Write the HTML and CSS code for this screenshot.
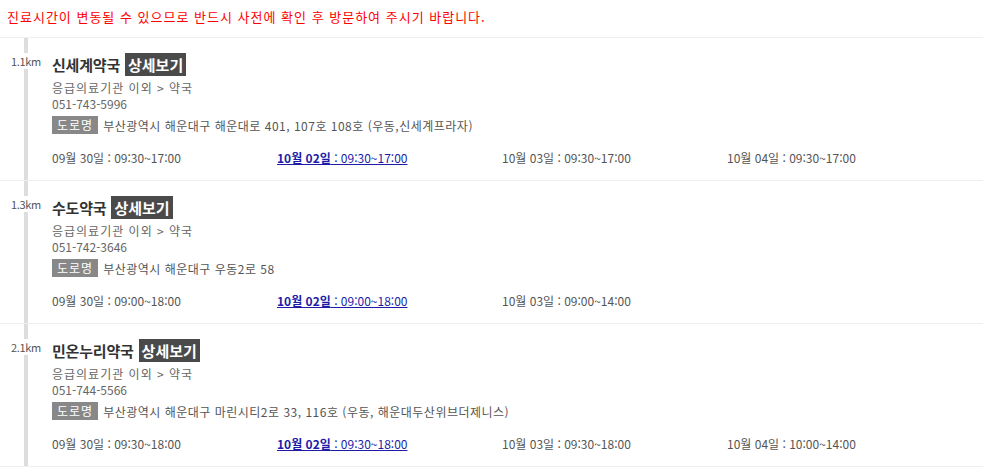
FILE: index.html
```html
<!DOCTYPE html>
<html lang="ko">
<head>
    <meta charset="UTF-8">
    <meta name="viewport" content="width=device-width, initial-scale=1.0">
    <title>약국 목록</title>
    <link rel="stylesheet" href="styles.css">
</head>
<body>
    <p class="notice">진료시간이 변동될 수 있으므로 반드시 사전에 확인 후 방문하여 주시기 바랍니다.</p>

    <ul class="list">
        <li class="item">
            <div class="dist"><span>1.1km</span></div>
            <div class="info">
                <div class="title">신세계약국 <a href="#" class="more">상세보기</a></div>
                <div class="cate">응급의료기관 이외 &gt; 약국</div>
                <div class="tel">051-743-5996</div>
                <div class="addr"><span class="tag">도로명</span>부산광역시 해운대구 해운대로 401, 107호 108호 (우동,신세계프라자)</div>
                <div class="hours">
                    <span>09월 30일 : 09:30~17:00</span>
                    <a href="#" class="today"><b>10월 02일</b> : 09:30~17:00</a>
                    <span>10월 03일 : 09:30~17:00</span>
                    <span>10월 04일 : 09:30~17:00</span>
                </div>
            </div>
        </li>
        <li class="item">
            <div class="dist"><span>1.3km</span></div>
            <div class="info">
                <div class="title">수도약국 <a href="#" class="more">상세보기</a></div>
                <div class="cate">응급의료기관 이외 &gt; 약국</div>
                <div class="tel">051-742-3646</div>
                <div class="addr"><span class="tag">도로명</span>부산광역시 해운대구 우동2로 58</div>
                <div class="hours">
                    <span>09월 30일 : 09:00~18:00</span>
                    <a href="#" class="today"><b>10월 02일</b> : 09:00~18:00</a>
                    <span>10월 03일 : 09:00~14:00</span>
                </div>
            </div>
        </li>
        <li class="item">
            <div class="dist"><span>2.1km</span></div>
            <div class="info">
                <div class="title">민온누리약국 <a href="#" class="more">상세보기</a></div>
                <div class="cate">응급의료기관 이외 &gt; 약국</div>
                <div class="tel">051-744-5566</div>
                <div class="addr"><span class="tag">도로명</span>부산광역시 해운대구 마린시티2로 33, 116호 (우동, 해운대두산위브더제니스)</div>
                <div class="hours">
                    <span>09월 30일 : 09:30~18:00</span>
                    <a href="#" class="today"><b>10월 02일</b> : 09:30~18:00</a>
                    <span>10월 03일 : 09:30~18:00</span>
                    <span>10월 04일 : 10:00~14:00</span>
                </div>
            </div>
        </li>
    </ul>
</body>
</html>
```

FILE: styles.css
```css
body {
    margin: 0;
    font-family: "Noto Sans CJK KR", "Liberation Sans", sans-serif;
    font-size: 12px;
    color: #555;
    background: #fff;
}
.notice {
    margin: 0;
    padding: 8px 7px 11px;
    line-height: 18px;
    font-size: 13px;
    letter-spacing: 1px;
    color: #f00;
    border-bottom: 1px solid #eee;
}
.list {
    list-style: none;
    margin: 0;
    padding: 0;
}
.item {
    display: grid;
    grid-template-columns: 52px 1fr;
    border-bottom: 1px solid #eee;
}
.dist {
    padding: 15px 11px 0 0;
    text-align: right;
    font-size: 11px;
    line-height: 16px;
    color: #555;
    background: linear-gradient(#ddd, #ddd) no-repeat 24px 0 / 4px 100%;
}
.dist span {
    background: #fff;
    letter-spacing: -0.3px;
}
.info {
    padding: 15px 0 12px;
}
.title {
    display: flex;
    align-items: center;
    gap: 5px;
    height: 23px;
    font-size: 15px;
    font-weight: bold;
    letter-spacing: -0.2px;
    color: #333;
}
.more {
    padding: 0 3px;
    line-height: 23px;
    letter-spacing: 0;
    color: #fff;
    background: #4a4a4a;
    text-decoration: none;
}
.cate {
    margin-top: 4px;
    line-height: 16px;
    letter-spacing: 1px;
    color: #666;
}
.tel {
    line-height: 16px;
    color: #666;
}
.addr {
    display: flex;
    align-items: center;
    gap: 5px;
    margin-top: 4px;
    height: 18px;
    letter-spacing: 0.5px;
    color: #555;
}
.tag {
    padding: 0 5px;
    line-height: 18px;
    font-size: 12px;
    letter-spacing: 1px;
    color: #fff;
    background: #888;
}
.hours {
    display: grid;
    grid-template-columns: repeat(4, 225px);
    margin-top: 14px;
    line-height: 20px;
    color: #555;
}
.today {
    justify-self: start;
    color: #1c1ca8;
}
```
